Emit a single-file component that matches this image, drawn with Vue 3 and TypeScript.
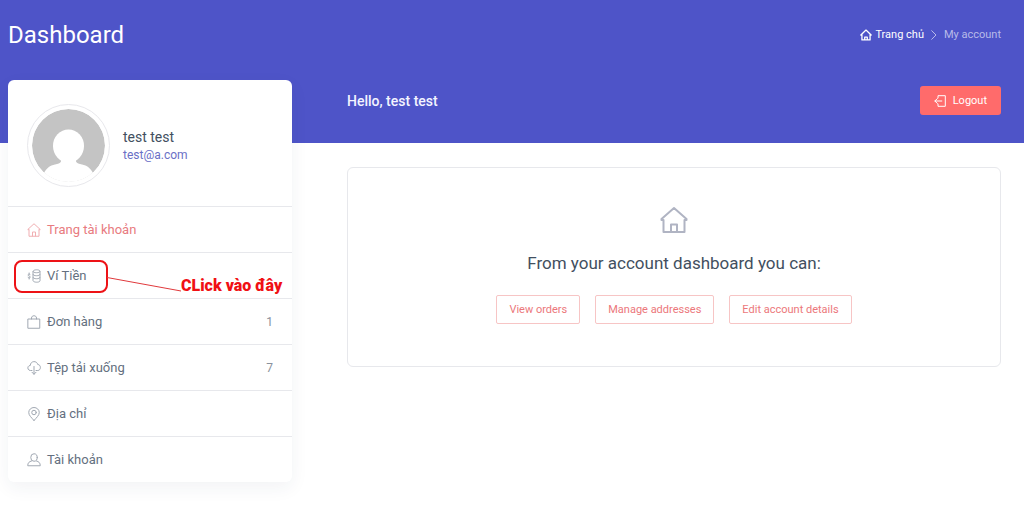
<script setup lang="ts">
type IconName = 'home' | 'wallet' | 'bag' | 'cloud' | 'pin' | 'user'

interface MenuItem {
  label: string
  icon: IconName
  count?: number
  active?: boolean
  hint?: string
}

const menu: MenuItem[] = [
  { label: 'Trang tài khoản', icon: 'home', active: true },
  { label: 'Ví Tiền', icon: 'wallet', hint: 'CLick vào đây' },
  { label: 'Đơn hàng', icon: 'bag', count: 1 },
  { label: 'Tệp tải xuống', icon: 'cloud', count: 7 },
  { label: 'Địa chỉ', icon: 'pin' },
  { label: 'Tài khoản', icon: 'user' },
]

const actions: string[] = ['View orders', 'Manage addresses', 'Edit account details']
</script>

<template>
  <div class="page">
    <header class="hero">
      <h1 class="title">Dashboard</h1>
      <nav class="crumbs" aria-label="Breadcrumb">
        <a class="crumb-home" href="#">
          <svg class="crumb-icon" viewBox="0 0 28 28" aria-hidden="true">
            <path d="M2 14 14 2.500 26 14M4.500 12v13.500h19V12M11 25v-6h6v6" />
          </svg>
          Trang chủ
        </a>
        <svg class="chevron" viewBox="0 0 6 10" aria-hidden="true"><path d="M.7.7 5 5 .7 9.300" /></svg>
        <span class="crumb-current">My account</span>
      </nav>
    </header>

    <div class="layout">
      <aside class="card">
        <div class="profile">
          <div class="avatar">
            <svg viewBox="0 0 73 73" aria-hidden="true">
              <circle cx="36.500" cy="36.500" r="36.500" fill="#c4c4c4" />
              <ellipse cx="36.500" cy="37" rx="15.500" ry="16.500" fill="#fff" />
              <path
                d="M29 48h15v4.500c1 2 3 2.500 6 3 5 1 8.500 3.500 11 8.500L58 73H15l-3-9c2.500-5 6-7.500 11-8.500 3-.5 5-1 6-3z"
                fill="#fff"
              />
            </svg>
          </div>
          <div>
            <div class="name">test test</div>
            <a class="email" href="#">test@a.com</a>
          </div>
        </div>

        <ul class="menu">
          <li v-for="item in menu" :key="item.label" class="menu-row">
            <a class="menu-link" :class="{ active: item.active }" href="#">
              <svg class="menu-icon" viewBox="0 0 28 28" aria-hidden="true">
                <path v-if="item.icon === 'home'" d="M3.500 13.500 1.500 13 14 1.500 26.500 13l-2 .500M4 13.500v13h20v-13M11 26v-8h6v8" />
                <g v-else-if="item.icon === 'wallet'">
                  <path d="M12 4.500c0-4 14-4 14 0v19c0 4-14 4-14 0zM12 5c0 3.500 14 3.500 14 0M12 11c0 3.500 14 3.500 14 0M12 17c0 3.500 14 3.500 14 0" />
                  <path d="M6.500 11.500c-1-2-4.500-1.500-4.500 .5 0 2.500 4.500 1.500 4.500 4 0 2.500-3.500 2.500-4.500 .5M4.300 8v2M4.300 18v2" />
                </g>
                <path v-else-if="item.icon === 'bag'" d="M2.500 8h23v18.500h-23zM9 8V6c0-6 10-6 10 0v2" />
                <path
                  v-else-if="item.icon === 'cloud'"
                  d="M10 19H7C0 19 0 9 6.500 9 7-1 20-1 21.500 7c7 0 7 12 0 12h-3.500M14 11v15.500M10 22.500l4 4 4-4"
                />
                <g v-else-if="item.icon === 'pin'">
                  <path d="M14 27C9 21 3.500 17 3.500 11a10.500 10 0 0 1 21 0c0 6-5.500 10-10.500 16z" />
                  <circle cx="14" cy="11" r="4.500" />
                </g>
                <g v-else>
                  <ellipse cx="14" cy="9" rx="6.500" ry="7.500" />
                  <path d="M9 16c-5 1.500-7.500 3.500-7.500 9.500h25c0-6-2.500-8-7.500-9.500" />
                </g>
              </svg>
              <span class="menu-label">{{ item.label }}</span>
              <span v-if="item.count" class="count">{{ item.count }}</span>
            </a>
            <template v-if="item.hint">
              <span class="hint-box"></span>
              <svg class="hint-line" viewBox="0 0 74 15" aria-hidden="true"><path d="M0 .5 74 14" /></svg>
              <span class="hint-text">{{ item.hint }}</span>
            </template>
          </li>
        </ul>
      </aside>

      <main class="content">
        <div class="greeting">
          <p class="hello">Hello, test test</p>
          <button class="logout" type="button">
            <svg class="logout-icon" viewBox="0 0 12 12" aria-hidden="true">
              <path d="M4 2.800V.7h7.300v10.600H4V9.200M7.800 6H1M3.400 3.600.8 6l2.600 2.400" />
            </svg>
            Logout
          </button>
        </div>
        <section class="panel">
          <svg class="panel-icon" viewBox="0 0 28 28" aria-hidden="true">
            <path d="M3.500 14H1.500V13L14 2l12.500 11v1h-2M3.500 14v12h21V14M11 26v-7.500h6V26" />
          </svg>
          <h2 class="panel-title">From your account dashboard you can:</h2>
          <div class="actions">
            <button v-for="action in actions" :key="action" class="action" type="button">{{ action }}</button>
          </div>
        </section>
      </main>
    </div>
  </div>
</template>

<style>
body {
  margin: 0;
  background: #fff;
}
</style>

<style scoped>
.page {
  font-family: Roboto, "Liberation Sans", sans-serif;
  color: #424f60;
}
.page * {
  box-sizing: border-box;
}
a {
  text-decoration: none;
}
button {
  font-family: inherit;
  cursor: pointer;
}
svg {
  display: block;
  fill: none;
  stroke: currentColor;
  stroke-linecap: round;
  stroke-linejoin: round;
  flex: none;
}
.hero {
  display: flex;
  justify-content: space-between;
  align-items: center;
  padding: 20px 23px 93px 8px;
  background: #4e54c8;
  color: #fff;
}
.title {
  margin: 0;
  font-size: 24px;
  line-height: 30px;
  font-weight: 400;
}
.crumbs {
  display: flex;
  align-items: center;
  gap: 7px;
  font-size: 11px;
  line-height: 16px;
}
.crumb-home {
  display: flex;
  align-items: center;
  gap: 3px;
  color: #fff;
}
.crumb-icon {
  width: 12px;
  height: 12px;
  stroke-width: 3;
}
.chevron {
  width: 6px;
  height: 10px;
  opacity: 0.6;
}
.crumb-current {
  color: #b8bbe9;
}
.layout {
  display: grid;
  grid-template-columns: 284px minmax(0, 1fr);
  gap: 55px;
  align-items: start;
  margin-top: -63px;
  padding: 0 23px 35px 8px;
}
.card {
  border-radius: 6px;
  background: #fff;
  box-shadow: 0 6px 18px rgba(40, 45, 80, 0.06);
}
.profile {
  display: flex;
  align-items: center;
  gap: 13px;
  padding: 24px 19px 19px;
}
.avatar {
  width: 83px;
  height: 83px;
  padding: 4px;
  border: 1px solid #e8e8ec;
  border-radius: 50%;
}
.avatar svg {
  width: 100%;
  height: 100%;
  border-radius: 50%;
  stroke: none;
}
.name {
  font-size: 14px;
  line-height: 18px;
}
.email {
  display: block;
  color: #6a6fc6;
  font-size: 12px;
  line-height: 18px;
}
.menu {
  margin: 0;
  padding: 0;
  list-style: none;
}
.menu-row {
  position: relative;
  border-top: 1px solid #e7e8ec;
}
.menu-link {
  display: flex;
  align-items: center;
  gap: 6px;
  height: 45px;
  padding: 0 19px;
  color: #647080;
  font-size: 13px;
}
.menu-link.active {
  color: #e87b80;
}
.menu-icon {
  width: 14px;
  height: 14px;
  stroke-width: 2;
  opacity: 0.6;
}
.menu-label {
  flex: 1;
}
.count {
  color: #8a919c;
  font-size: 12px;
}
.hint-box {
  position: absolute;
  left: 6px;
  top: 7px;
  width: 94px;
  height: 33px;
  border: 2px solid #ed1216;
  border-radius: 8px;
  pointer-events: none;
}
.hint-line {
  position: absolute;
  left: 99px;
  top: 24px;
  width: 74px;
  height: 15px;
  color: #e0393c;
}
.hint-text {
  position: absolute;
  left: 173px;
  top: 21px;
  color: #f01014;
  font-size: 16px;
  font-weight: 900;
  line-height: 24px;
  white-space: nowrap;
}
.greeting {
  display: flex;
  align-items: center;
  justify-content: space-between;
  padding-top: 6px;
  color: #f4f4ff;
}
.hello {
  margin: 0;
  font-size: 14px;
  line-height: 18px;
  font-weight: 500;
}
.logout {
  display: flex;
  align-items: center;
  gap: 7px;
  height: 29px;
  padding: 0 14px;
  border: 0;
  border-radius: 3px;
  background: #ff6b6b;
  color: #fff;
  font-size: 11px;
}
.logout-icon {
  width: 12px;
  height: 12px;
}
.panel {
  display: flex;
  flex-direction: column;
  align-items: center;
  margin-top: 52px;
  padding: 38px 20px 42px;
  border: 1px solid #e7e8ec;
  border-radius: 6px;
}
.panel-icon {
  width: 28px;
  height: 28px;
  color: #b0b4c3;
  stroke-width: 2;
}
.panel-title {
  margin: 17px 0 20px;
  font-size: 17px;
  line-height: 24px;
  font-weight: 400;
}
.actions {
  display: flex;
  flex-wrap: wrap;
  justify-content: center;
  gap: 15px;
}
.action {
  height: 29px;
  padding: 0 12px;
  border: 1px solid #f7c5c5;
  border-radius: 2px;
  background: #fff;
  color: #ec777b;
  font-size: 11px;
}
</style>
